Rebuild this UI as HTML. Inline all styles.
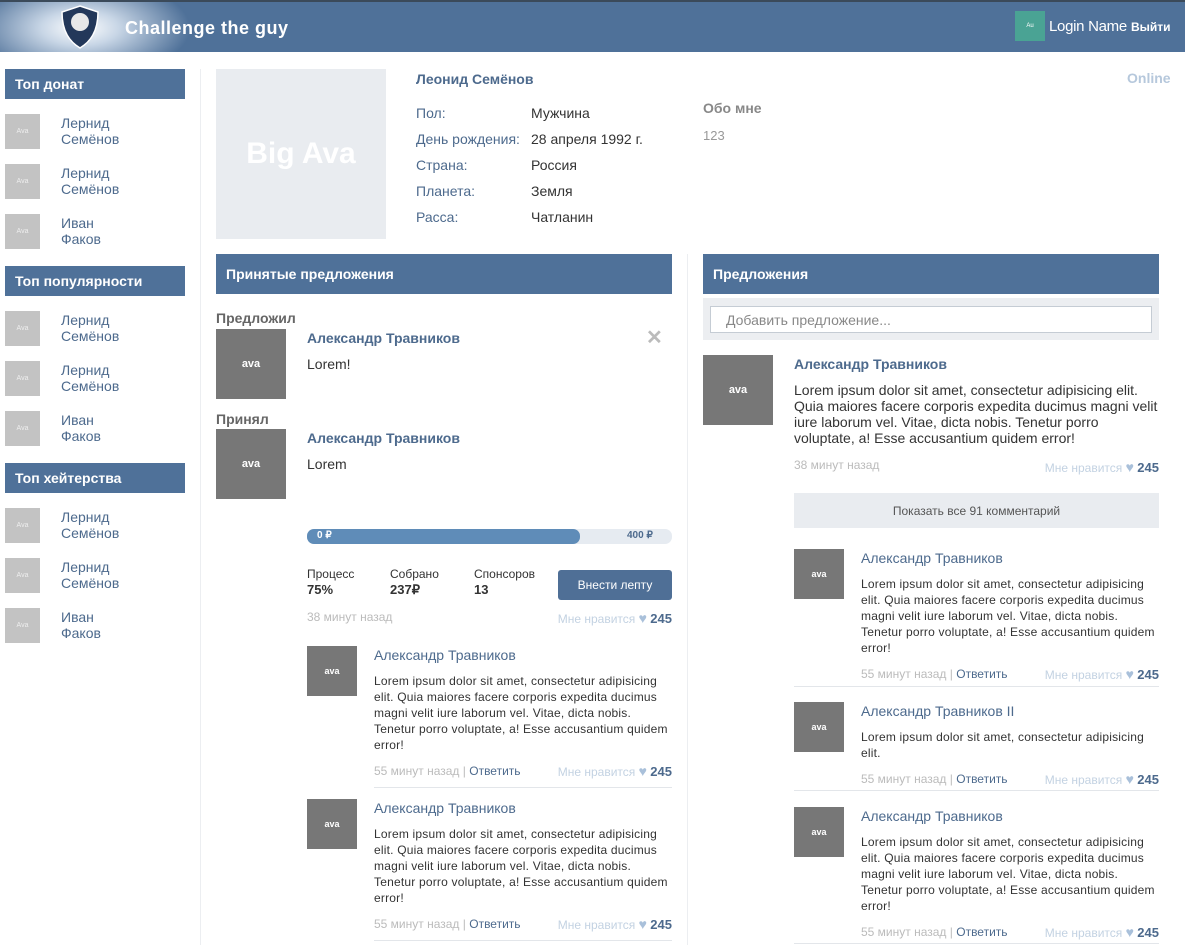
<!DOCTYPE html>
<html><head><meta charset="utf-8"><style>
*{margin:0;padding:0;box-sizing:border-box}
body{width:1185px;height:945px;overflow:hidden;background:#fff;font-family:"Liberation Sans",Arial,sans-serif;position:relative;color:#333}
.a{position:absolute;white-space:nowrap}
.hd{position:absolute;background:#4f7199;color:#fff;font-weight:bold;font-size:14px;padding-left:10px;display:flex;align-items:center}
.sav{position:absolute;width:35px;height:35px;background:#c3c3c3;color:#eee;font-size:7px;display:flex;align-items:center;justify-content:center}
.nm{position:absolute;color:#4d6a8d;font-size:14px;line-height:16px}
.av{position:absolute;background:#777;color:#fff;font-weight:bold;font-size:11px;display:flex;align-items:center;justify-content:center}
.lab{color:#4d6a8d;font-size:14px}
.val{color:#333;font-size:14px}
.bn{color:#4d6a8d;font-size:14px;font-weight:bold}
.cn{color:#4d6a8d;font-size:14px}
.tx{position:absolute;font-size:12px;line-height:16px;color:#333;white-space:nowrap;letter-spacing:0.2px}
.gr{color:#bbb;font-size:12px}
.lk{color:#c3d2e2;font-size:12px}
.lk i{font-style:normal;color:#a9c0da;font-size:14px}
.lk b{color:#4d6a8d;font-size:13px}
.ln{position:absolute;height:1px;background:#e3e6ea}
</style></head><body>
<div class="a" style="left:0;top:0;width:1185px;height:52px;background:#4f7199;border-top:2px solid #3b4a5a"></div>
<div class="a" style="left:0;top:2px;width:260px;height:50px;background:radial-gradient(ellipse 110px 50px at 80px 26px,#ffffff 0%,#c8d6e6 35%,rgba(79,113,153,0) 100%)"></div>
<svg class="a" style="left:58px;top:4px" width="44" height="46" viewBox="0 0 44 46"><path d="M22 2 L40 8 C40 28 32 38 22 44 C12 38 4 28 4 8 Z" fill="#23385a" stroke="#fff" stroke-width="1.5"/><circle cx="22" cy="18" r="9" fill="#e8e8e8"/></svg>
<div class="a" style="left:125px;top:18px;color:#fff;font-size:18px;font-weight:bold;letter-spacing:0.5px">Challenge the guy</div>
<div class="a" style="left:1015px;top:11px;width:30px;height:30px;background:#4aa394;color:#fff;font-size:6px;display:flex;align-items:center;justify-content:center">Au</div>
<div class="a" style="left:1049px;top:18px;color:#fff;font-size:15px;letter-spacing:-0.3px">Login Name</div>
<div class="a" style="left:1131px;top:20px;color:#fff;font-size:12px;font-weight:bold">Выйти</div>

<div class="hd" style="left:5px;top:69px;width:180px;height:30px">Топ донат</div>
<div class="hd" style="left:5px;top:266px;width:180px;height:30px">Топ популярности</div>
<div class="hd" style="left:5px;top:463px;width:180px;height:30px">Топ хейтерства</div>
<div class="sav" style="left:5px;top:114px">Ava</div><div class="nm" style="left:61px;top:115px">Лернид<br>Семёнов</div>
<div class="sav" style="left:5px;top:164px">Ava</div><div class="nm" style="left:61px;top:165px">Лернид<br>Семёнов</div>
<div class="sav" style="left:5px;top:214px">Ava</div><div class="nm" style="left:61px;top:215px">Иван<br>Факов</div>
<div class="sav" style="left:5px;top:311px">Ava</div><div class="nm" style="left:61px;top:312px">Лернид<br>Семёнов</div>
<div class="sav" style="left:5px;top:361px">Ava</div><div class="nm" style="left:61px;top:362px">Лернид<br>Семёнов</div>
<div class="sav" style="left:5px;top:411px">Ava</div><div class="nm" style="left:61px;top:412px">Иван<br>Факов</div>
<div class="sav" style="left:5px;top:508px">Ava</div><div class="nm" style="left:61px;top:509px">Лернид<br>Семёнов</div>
<div class="sav" style="left:5px;top:558px">Ava</div><div class="nm" style="left:61px;top:559px">Лернид<br>Семёнов</div>
<div class="sav" style="left:5px;top:608px">Ava</div><div class="nm" style="left:61px;top:609px">Иван<br>Факов</div>
<div class="a" style="left:200px;top:69px;width:1px;height:876px;background:#eceef1"></div>
<div class="a" style="left:687px;top:254px;width:1px;height:691px;background:#eceef1"></div>

<div class="a" style="left:216px;top:69px;width:170px;height:170px;background:#e9ecf0;color:#fff;font-size:30px;font-weight:bold;display:flex;align-items:center;justify-content:center">Big Ava</div>
<div class="a bn" style="left:416px;top:71px">Леонид Семёнов</div>
<div class="a lab" style="left:416px;top:105px">Пол:</div><div class="a val" style="left:531px;top:105px">Мужчина</div>
<div class="a lab" style="left:416px;top:131px">День рождения:</div><div class="a val" style="left:531px;top:131px">28 апреля 1992 г.</div>
<div class="a lab" style="left:416px;top:157px">Страна:</div><div class="a val" style="left:531px;top:157px">Россия</div>
<div class="a lab" style="left:416px;top:183px">Планета:</div><div class="a val" style="left:531px;top:183px">Земля</div>
<div class="a lab" style="left:416px;top:209px">Расса:</div><div class="a val" style="left:531px;top:209px">Чатланин</div>
<div class="a" style="left:703px;top:100px;color:#888;font-weight:bold;font-size:14px">Обо мне</div>
<div class="a" style="left:703px;top:128px;color:#999;font-size:13px">123</div>
<div class="a" style="left:1127px;top:70px;color:#b6c8dc;font-weight:bold;font-size:14px">Online</div>

<div class="hd" style="left:216px;top:254px;width:456px;height:40px">Принятые предложения</div>
<div class="hd" style="left:703px;top:254px;width:456px;height:40px">Предложения</div>

<div class="a" style="left:216px;top:310px;color:#666;font-weight:bold;font-size:14px">Предложил</div>
<div class="av" style="left:216px;top:329px;width:70px;height:70px">ava</div>
<div class="a bn" style="left:307px;top:330px">Александр Травников</div>
<div class="a" style="left:646px;top:325px;color:#bbb;font-size:20px;font-weight:bold">✕</div>
<div class="a val" style="left:307px;top:356px">Lorem!</div>
<div class="a" style="left:216px;top:411px;color:#666;font-weight:bold;font-size:14px">Принял</div>
<div class="av" style="left:216px;top:429px;width:70px;height:70px">ava</div>
<div class="a bn" style="left:307px;top:430px">Александр Травников</div>
<div class="a val" style="left:307px;top:456px">Lorem</div>
<div class="a" style="left:307px;top:529px;width:365px;height:15px;border-radius:7px;background:#e6ebf1"></div>
<div class="a" style="left:307px;top:529px;width:273px;height:15px;border-radius:7px;background:#5f8cb8"></div>
<div class="a" style="left:317px;top:530px;color:#fff;font-size:10px;font-weight:bold">0 ₽</div>
<div class="a" style="left:627px;top:530px;color:#4d6a8d;font-size:10px;font-weight:bold">400 ₽</div>
<div class="a" style="left:307px;top:566px;font-size:12px;line-height:16px">Процесс<br><b style="font-size:13px">75%</b></div>
<div class="a" style="left:390px;top:566px;font-size:12px;line-height:16px">Собрано<br><b style="font-size:13px">237₽</b></div>
<div class="a" style="left:474px;top:566px;font-size:12px;line-height:16px">Спонсоров<br><b style="font-size:13px">13</b></div>
<div class="a" style="left:558px;top:570px;width:114px;height:30px;background:#4f6f96;border-radius:3px;color:#fff;font-size:12px;display:flex;align-items:center;justify-content:center">Внести лепту</div>
<div class="a gr" style="left:307px;top:610px">38 минут назад</div>
<div class="a lk" style="right:513px;top:610px">Мне нравится <i>♥</i> <b>245</b></div>

<div class="av" style="left:307px;top:646px;width:50px;height:50px;font-size:9px">ava</div>
<div class="a cn" style="left:374px;top:647px">Александр Травников</div>
<div class="tx" style="left:374px;top:673px">Lorem ipsum dolor sit amet, consectetur adipisicing<br>elit. Quia maiores facere corporis expedita ducimus<br>magni velit iure laborum vel. Vitae, dicta nobis.<br>Tenetur porro voluptate, a! Esse accusantium quidem<br>error!</div>
<div class="a gr" style="left:374px;top:764px">55 минут назад | <span style="color:#4d6a8d">Ответить</span></div>
<div class="a lk" style="right:513px;top:763px">Мне нравится <i>♥</i> <b>245</b></div>
<div class="ln" style="left:374px;top:787px;width:298px"></div>
<div class="av" style="left:307px;top:799px;width:50px;height:50px;font-size:9px">ava</div>
<div class="a cn" style="left:374px;top:800px">Александр Травников</div>
<div class="tx" style="left:374px;top:826px">Lorem ipsum dolor sit amet, consectetur adipisicing<br>elit. Quia maiores facere corporis expedita ducimus<br>magni velit iure laborum vel. Vitae, dicta nobis.<br>Tenetur porro voluptate, a! Esse accusantium quidem<br>error!</div>
<div class="a gr" style="left:374px;top:917px">55 минут назад | <span style="color:#4d6a8d">Ответить</span></div>
<div class="a lk" style="right:513px;top:916px">Мне нравится <i>♥</i> <b>245</b></div>
<div class="ln" style="left:374px;top:940px;width:298px"></div>

<div class="a" style="left:703px;top:298px;width:456px;height:42px;background:#eceef1"></div>
<div class="a" style="left:710px;top:306px;width:442px;height:27px;background:#fff;border:1px solid #c5ccd4;color:#888;font-size:14px;padding:5px 15px">Добавить предложение...</div>
<div class="av" style="left:703px;top:355px;width:70px;height:70px">ava</div>
<div class="a bn" style="left:794px;top:356px">Александр Травников</div>
<div class="tx" style="left:794px;top:382px;font-size:14px;letter-spacing:0">Lorem ipsum dolor sit amet, consectetur adipisicing elit.<br>Quia maiores facere corporis expedita ducimus magni velit<br>iure laborum vel. Vitae, dicta nobis. Tenetur porro<br>voluptate, a! Esse accusantium quidem error!</div>
<div class="a gr" style="left:794px;top:458px">38 минут назад</div>
<div class="a lk" style="right:26px;top:459px">Мне нравится <i>♥</i> <b>245</b></div>
<div class="a" style="left:794px;top:493px;width:365px;height:35px;background:#e9ecf0;color:#555;font-size:12px;display:flex;align-items:center;justify-content:center">Показать все 91 комментарий</div>

<div class="av" style="left:794px;top:549px;width:50px;height:50px;font-size:9px">ava</div>
<div class="a cn" style="left:861px;top:550px">Александр Травников</div>
<div class="tx" style="left:861px;top:576px">Lorem ipsum dolor sit amet, consectetur adipisicing<br>elit. Quia maiores facere corporis expedita ducimus<br>magni velit iure laborum vel. Vitae, dicta nobis.<br>Tenetur porro voluptate, a! Esse accusantium quidem<br>error!</div>
<div class="a gr" style="left:861px;top:667px">55 минут назад | <span style="color:#4d6a8d">Ответить</span></div>
<div class="a lk" style="right:26px;top:666px">Мне нравится <i>♥</i> <b>245</b></div>
<div class="ln" style="left:794px;top:686px;width:365px"></div>
<div class="av" style="left:794px;top:702px;width:50px;height:50px;font-size:9px">ava</div>
<div class="a cn" style="left:861px;top:703px">Александр Травников II</div>
<div class="tx" style="left:861px;top:729px">Lorem ipsum dolor sit amet, consectetur adipisicing<br>elit.</div>
<div class="a gr" style="left:861px;top:772px">55 минут назад | <span style="color:#4d6a8d">Ответить</span></div>
<div class="a lk" style="right:26px;top:771px">Мне нравится <i>♥</i> <b>245</b></div>
<div class="ln" style="left:794px;top:790px;width:365px"></div>
<div class="av" style="left:794px;top:807px;width:50px;height:50px;font-size:9px">ava</div>
<div class="a cn" style="left:861px;top:808px">Александр Травников</div>
<div class="tx" style="left:861px;top:834px">Lorem ipsum dolor sit amet, consectetur adipisicing<br>elit. Quia maiores facere corporis expedita ducimus<br>magni velit iure laborum vel. Vitae, dicta nobis.<br>Tenetur porro voluptate, a! Esse accusantium quidem<br>error!</div>
<div class="a gr" style="left:861px;top:925px">55 минут назад | <span style="color:#4d6a8d">Ответить</span></div>
<div class="a lk" style="right:26px;top:924px">Мне нравится <i>♥</i> <b>245</b></div>
<div class="ln" style="left:794px;top:943px;width:365px"></div>
</body></html>
